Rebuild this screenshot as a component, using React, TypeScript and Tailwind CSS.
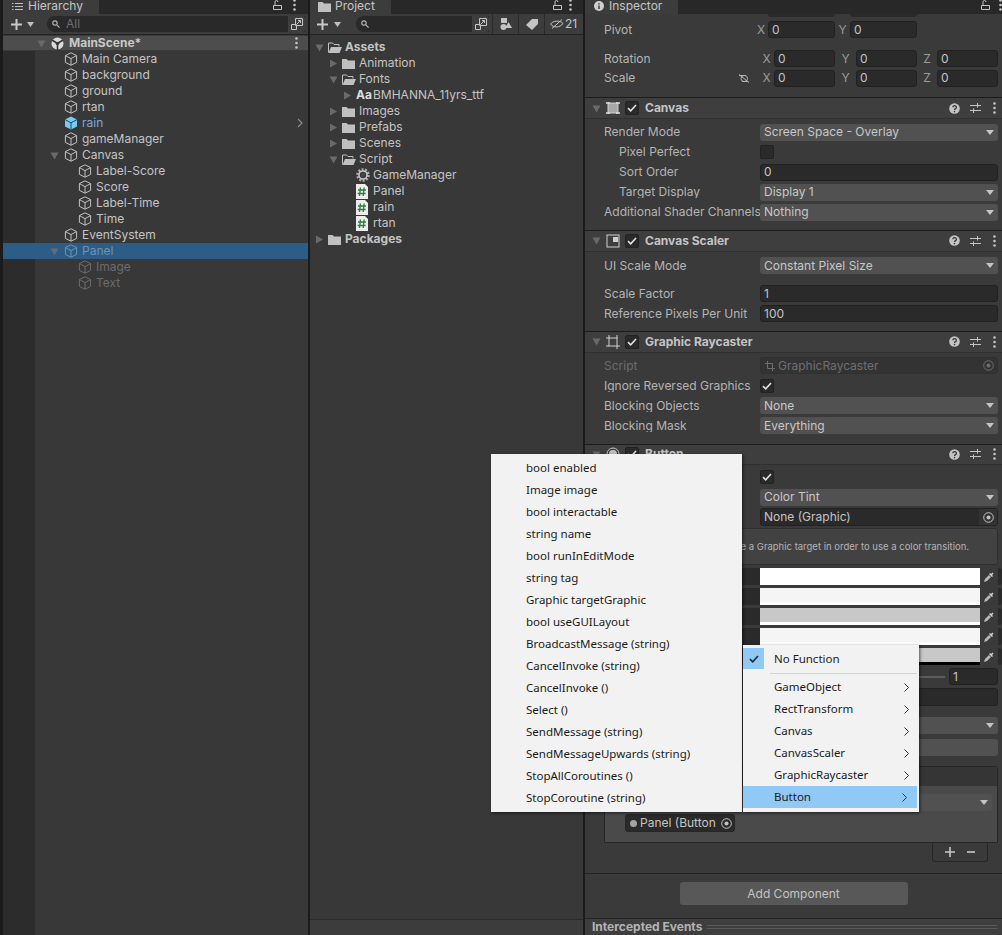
import React from "react";

type NodeRow = {
  name: string;
  pad: string;
  arrow?: "open" | "closed";
  text?: string;
  icon?: string;
  bg?: string;
};

const hierarchyRows: NodeRow[] = [
  { name: "Main Camera", pad: "pl-[47px]" },
  { name: "background", pad: "pl-[47px]" },
  { name: "ground", pad: "pl-[47px]" },
  { name: "rtan", pad: "pl-[47px]" },
  { name: "rain", pad: "pl-[47px]", text: "text-[#7aa9de]", icon: "blue" },
  { name: "gameManager", pad: "pl-[47px]" },
  { name: "Canvas", pad: "pl-[47px]", arrow: "open" },
  { name: "Label-Score", pad: "pl-[61px]" },
  { name: "Score", pad: "pl-[61px]" },
  { name: "Label-Time", pad: "pl-[61px]" },
  { name: "Time", pad: "pl-[61px]" },
  { name: "EventSystem", pad: "pl-[47px]" },
  { name: "Panel", pad: "pl-[47px]", arrow: "open", text: "text-[#6d93b6]", icon: "dimblue", bg: "bg-[#2c5d87]" },
  { name: "Image", pad: "pl-[61px]", text: "text-[#6c6c6c]", icon: "dim" },
  { name: "Text", pad: "pl-[61px]", text: "text-[#6c6c6c]", icon: "dim" },
];

const menuOne = [
  "bool enabled",
  "Image image",
  "bool interactable",
  "string name",
  "bool runInEditMode",
  "string tag",
  "Graphic targetGraphic",
  "bool useGUILayout",
  "BroadcastMessage (string)",
  "CancelInvoke (string)",
  "CancelInvoke ()",
  "Select ()",
  "SendMessage (string)",
  "SendMessageUpwards (string)",
  "StopAllCoroutines ()",
  "StopCoroutine (string)",
];

const menuTwo = ["GameObject", "RectTransform", "Canvas", "CanvasScaler", "GraphicRaycaster", "Button"];

const Arrow = ({ open }: { open?: boolean }) => (
  <svg width="9" height="9" viewBox="0 0 9 9" className="shrink-0">
    {open ? <path d="M0.5 1.5h8L4.5 8.5z" fill="#6a6a6a" /> : <path d="M1 0.5v8l7-4z" fill="#6a6a6a" />}
  </svg>
);

const Cube = ({ kind }: { kind?: string }) => {
  if (kind === "blue") {
    return (
      <svg width="14" height="14" viewBox="0 0 14 14" className="shrink-0">
        <path d="M7 .5l6 3v7l-6 3-6-3v-7z" fill="#72cdf6" />
        <path d="M1 3.6L7 6.8l6-3.2M7 6.8v6.7" fill="none" stroke="#2f4552" strokeWidth="1" />
      </svg>
    );
  }
  const c = kind === "dim" ? "#6c6c6c" : kind === "dimblue" ? "#6d93b6" : "#c2c2c2";
  return (
    <svg width="14" height="14" viewBox="0 0 14 14" fill="none" stroke={c} strokeWidth="1" className="shrink-0">
      <path d="M7 .8l5.6 2.8v6.8L7 13.2 1.4 10.4V3.6z" />
      <path d="M1.4 3.6L7 6.6l5.6-3M7 6.6v6.6" />
    </svg>
  );
};

const FolderClosed = () => (
  <svg width="13" height="11" viewBox="0 0 13 11" className="shrink-0">
    <path d="M0 1h4.5l1.5 1.5h7V11H0z" fill="#c0c0c0" />
  </svg>
);

const FolderOpen = () => (
  <svg width="14" height="11" viewBox="0 0 14 11" className="shrink-0">
    <path d="M.5 10.5V1h4l1.5 1.5h5V4.5" fill="none" stroke="#c0c0c0" strokeWidth="1" />
    <path d="M3 5h11l-2.5 6H.5z" fill="#c0c0c0" />
  </svg>
);

const HashFile = () => (
  <svg width="12" height="15" viewBox="0 0 12 15" className="shrink-0">
    <path d="M0 0h9l3 3v12H0z" fill="#ededed" />
    <path d="M4.5 3.5L3.5 12M8.2 3.5L7.2 12M2 6h8M1.6 9.5h8" stroke="#2f7d3a" strokeWidth="1.3" fill="none" />
  </svg>
);

const Gear = () => (
  <svg width="14" height="14" viewBox="0 0 14 14" className="shrink-0">
    <circle cx="7" cy="7" r="5.5" fill="none" stroke="#a9a9a9" strokeWidth="2.6" strokeDasharray="2 1.4" />
    <circle cx="7" cy="7" r="4" fill="none" stroke="#c8c8c8" strokeWidth="1.6" />
    <circle cx="7" cy="7" r="2.2" fill="#3f4654" />
  </svg>
);

const SceneIcon = () => (
  <svg width="13" height="13" viewBox="0 0 13 13" className="shrink-0">
    <circle cx="6.5" cy="6.5" r="6" fill="#dcdcdc" />
    <path d="M6.5 6.5V13M6.5 6.5L1 3M6.5 6.5L12 3" stroke="#383838" strokeWidth="1.6" fill="none" />
    <circle cx="6.5" cy="6.5" r="1.8" fill="#383838" />
  </svg>
);

const Kebab = () => (
  <svg width="3" height="12" viewBox="0 0 3 12" className="shrink-0">
    <circle cx="1.5" cy="1.5" r="1.3" fill="#c4c4c4" />
    <circle cx="1.5" cy="6" r="1.3" fill="#c4c4c4" />
    <circle cx="1.5" cy="10.5" r="1.3" fill="#c4c4c4" />
  </svg>
);

const Lock = () => (
  <svg width="9" height="10" viewBox="0 0 9 10" fill="none" stroke="#c4c4c4" className="shrink-0">
    <path d="M.5 5.5h8v4h-8zM2 5.5V2a1.5 1.5 0 0 1 3 0" />
  </svg>
);

const Plus = () => (
  <svg width="11" height="11" viewBox="0 0 11 11" className="shrink-0">
    <path d="M5.5 0v11M0 5.5h11" stroke="#c8c8c8" strokeWidth="2" />
  </svg>
);

const Caret = () => (
  <svg width="7" height="5" viewBox="0 0 7 5" className="shrink-0">
    <path d="M0 0h7L3.5 5z" fill="#c0c0c0" />
  </svg>
);

const Magnifier = () => (
  <svg width="8" height="8" viewBox="0 0 8 8" fill="none" stroke="#b4b4b4" strokeWidth="1.2" className="shrink-0">
    <circle cx="3" cy="3" r="2.2" />
    <path d="M4.8 4.8L7.6 7.6" />
  </svg>
);

const PickerIcon = () => (
  <svg width="12" height="12" viewBox="0 0 12 12" fill="none" stroke="#c4c4c4" className="shrink-0">
    <path d="M4.5.5h7v7h-7zM.5 6.5h5v5h-5z" />
    <path d="M6 6l3.5-3.5M7 2.5h2.5V5" />
  </svg>
);

const Check = ({ color = "#e2e2e2" }: { color?: string }) => (
  <svg width="10" height="8" viewBox="0 0 10 8" fill="none" stroke={color} strokeWidth="1.6" className="shrink-0">
    <path d="M1 4.2L3.7 6.8 9 1" />
  </svg>
);

const Target = ({ c = "#c4c4c4" }: { c?: string }) => (
  <svg width="11" height="11" viewBox="0 0 11 11" className="shrink-0">
    <circle cx="5.5" cy="5.5" r="4.8" fill="none" stroke={c} />
    <circle cx="5.5" cy="5.5" r="2" fill={c} />
  </svg>
);

const Dropper = () => (
  <svg width="12" height="12" viewBox="0 0 12 12" className="shrink-0">
    <path d="M1 11l1-3 4-4 2 2-4 4z" fill="#b8b8b8" />
    <path d="M6 3l1-1 1 1 1.5-1.5 1 1L9 4l1 1-1 1z" fill="#d4d4d4" />
  </svg>
);

const HelpIcon = () => (
  <svg width="11" height="11" viewBox="0 0 11 11" className="shrink-0">
    <circle cx="5.5" cy="5.5" r="5.3" fill="#c4c4c4" />
    <path d="M3.8 4.2a1.8 1.6 0 1 1 2.7 1.4c-.7.4-1 .6-1 1.3" fill="none" stroke="#3c3c3c" strokeWidth="1.3" />
    <circle cx="5.5" cy="8.6" r=".8" fill="#3c3c3c" />
  </svg>
);

const Presets = () => (
  <svg width="11" height="10" viewBox="0 0 11 10" stroke="#c4c4c4" fill="none" className="shrink-0">
    <path d="M0 2.5h11M0 7.5h11M7.5 0v4.5M3.5 5.5V10" />
  </svg>
);

const TreeRow = ({ row }: { row: NodeRow }) => (
  <div className={`flex h-4 items-center ${row.pad} ${row.bg ?? ""}`}>
    <span className="flex w-[14px] shrink-0">{row.arrow && <Arrow open />}</span>
    <Cube kind={row.icon} />
    <span className={`ml-[4px] ${row.text ?? "text-[#c4c4c4]"}`}>{row.name}</span>
    {row.name === "rain" && (
      <svg width="6" height="10" viewBox="0 0 6 10" fill="none" stroke="#8a8a8a" strokeWidth="1.2" className="ml-auto mr-[5px]">
        <path d="M1 1l4 4-4 4" />
      </svg>
    )}
  </div>
);

const ProjectRow = ({ pad, arrow, icon, label, bold }: { pad: string; arrow?: "open" | "closed"; icon: React.ReactNode; label: string; bold?: boolean }) => (
  <div className={`flex h-4 items-center ${pad}`}>
    <span className="flex w-[13px] shrink-0">{arrow && <Arrow open={arrow === "open"} />}</span>
    <span className="flex w-[17px] shrink-0">{icon}</span>
    <span className={bold ? "font-bold text-[#c4c4c4]" : "text-[#c4c4c4]"}>{label}</span>
  </div>
);

const Field = ({ value, w = "flex-1", dim }: { value?: string; w?: string; dim?: boolean }) => (
  <div className={`flex h-[17px] items-center rounded-[3px] border border-[#212121] bg-[#2a2a2a] pl-[3px] ${w} ${dim ? "text-[#6c6c6c]" : "text-[#c4c4c4]"}`}>
    {value}
  </div>
);

const Dropdown = ({ value, w = "flex-1" }: { value?: string; w?: string }) => (
  <div className={`flex h-[17px] items-center justify-between rounded-[3px] bg-[#515151] pl-[4px] pr-[4px] text-[#c8c8c8] ${w}`}>
    <span>{value}</span>
    <svg width="8" height="5" viewBox="0 0 8 5">
      <path d="M0 0h8L4 5z" fill="#c4c4c4" />
    </svg>
  </div>
);

const CheckBox = ({ on }: { on?: boolean }) => (
  <div className="flex h-[14px] w-[14px] items-center justify-center rounded-[2px] border border-[#222222] bg-[#2a2a2a]">
    {on && <Check />}
  </div>
);

const Row = ({ label, indent, dim, children }: { label: string; indent?: boolean; dim?: boolean; children: React.ReactNode }) => (
  <div className="flex h-5 items-center pl-[19px] pr-1">
    <div className={`w-[156px] shrink-0 overflow-hidden whitespace-nowrap ${indent ? "pl-[15px]" : ""} ${dim ? "text-[#6c6c6c]" : "text-[#b4b4b4]"}`}>{label}</div>
    <div className="flex min-w-0 flex-1 items-center">{children}</div>
  </div>
);

const Header = ({ icon, title }: { icon: React.ReactNode; title: string }) => (
  <div className="flex h-[22px] items-center border-y border-t-[#1c1c1c] border-b-[#303030] bg-[#3e3e3e] pl-[7px] pr-1">
    <Arrow open />
    <span className="ml-[5px] flex w-[14px] justify-center">{icon}</span>
    <span className="ml-[5px]">
      <CheckBox on />
    </span>
    <span className="ml-[6px] font-bold text-[#c4c4c4]">{title}</span>
    <span className="ml-auto flex items-center">
      <HelpIcon />
      <span className="ml-[10px] flex">
        <Presets />
      </span>
      <span className="ml-[12px] mr-[2px] flex">
        <Kebab />
      </span>
    </span>
  </div>
);

const RectIcon = ({ kind }: { kind: string }) => (
  <svg width="14" height="14" viewBox="0 0 14 14" className="shrink-0">
    {kind === "canvas" && (
      <>
        <rect x="2" y="2" width="10" height="10" fill="#a8a8a8" stroke="#d0d0d0" />
        <path d="M0 2h4M0 12h4M10 2h4M10 12h4" stroke="#e0e0e0" strokeWidth="1.4" />
      </>
    )}
    {kind === "scaler" && (
      <>
        <rect x="1" y="1" width="12" height="12" fill="none" stroke="#d0d0d0" />
        <rect x="7" y="3" width="5" height="5" fill="#d0d0d0" />
      </>
    )}
    {kind === "ray" && (
      <>
        <rect x="3" y="3" width="8" height="8" fill="none" stroke="#d0d0d0" />
        <path d="M0 3h3M3 0v3M11 14v-3M14 11h-3M11 0v3M0 11h3" stroke="#d0d0d0" />
      </>
    )}
    {kind === "button" && (
      <>
        <circle cx="7" cy="7" r="6" fill="none" stroke="#c4c4c4" />
        <circle cx="7" cy="7" r="4" fill="#c4c4c4" />
      </>
    )}
  </svg>
);

const Swatch = ({ fill, strip }: { fill: string; strip: string }) => (
  <div className="flex h-[17px] items-stretch overflow-hidden rounded-[2px] bg-[#2a2a2a] pl-[175px] pr-1 mt-[3px] first:mt-0">
    <div className={`flex w-[220px] flex-col ${fill}`}>
      <div className="flex-1" />
      <div className={`h-[3px] ${strip}`} />
    </div>
    <div className="flex flex-1 items-center justify-center bg-[#3a3a3a]">
      <Dropper />
    </div>
  </div>
);

const TabIconBars = () => (
  <svg width="11" height="9" viewBox="0 0 11 9" stroke="#c0c0c0" className="shrink-0">
    <path d="M3 1.5h8M3 4.5h8M3 7.5h8M0 1.5h1.5M0 4.5h1.5M0 7.5h1.5" />
  </svg>
);

const VectorAxis = ({ a, w }: { a: string; w: string }) => <span className={`${w} shrink-0 text-center text-[#9a9a9a]`}>{a}</span>;

export default function App() {
  return (
    <div className="relative flex h-[935px] w-[1002px] overflow-hidden bg-[#1b1b1b] font-['Inter',sans-serif] text-[12px] leading-none">
      {/* Hierarchy */}
      <section className="ml-[3px] flex h-full w-[305px] shrink-0 flex-col">
        <div className="flex h-[14px] shrink-0 items-center bg-[#282828]">
          <div className="flex h-full w-[96px] items-center bg-[#3c3c3c] pb-[2px] pl-[9px] text-[#c4c4c4]">
            <TabIconBars />
            <span className="ml-[5px]">Hierarchy</span>
          </div>
          <span className="ml-auto flex items-center pb-[4px]">
            <Lock />
            <span className="ml-[11px] mr-[12px] flex">
              <Kebab />
            </span>
          </span>
        </div>
        <div className="flex h-[21px] shrink-0 items-center border-b border-[#232323] bg-[#3c3c3c]">
          <span className="ml-[8px] flex">
            <Plus />
          </span>
          <span className="ml-[5px] flex">
            <Caret />
          </span>
          <div className="ml-[13px] flex h-[16px] w-[258px] items-center rounded-l-full rounded-r-[3px] bg-[#292929] pl-[5px]">
            <Magnifier />
            <span className="ml-[6px] text-[#6e6e6e]">All</span>
            <span className="ml-auto flex h-full w-[17px] items-center justify-center rounded-r-[3px] bg-[#3e3e3e]">
              <PickerIcon />
            </span>
          </div>
        </div>
        <div className="flex-1 bg-[linear-gradient(to_right,#2c2c2c_32px,#383838_32px)]">
          <div className="flex h-4 items-center border-y border-[#3a3a3a] bg-[#4d4d4d] pl-[34px]">
            <Arrow open />
            <span className="ml-[5px] flex">
              <SceneIcon />
            </span>
            <span className="ml-[5px] font-bold text-[#c8c8c8]">MainScene*</span>
            <span className="ml-auto mr-[10px] flex">
              <Kebab />
            </span>
          </div>
          {hierarchyRows.map((row) => (
            <TreeRow key={row.name} row={row} />
          ))}
        </div>
      </section>

      {/* Project */}
      <section className="ml-[2px] flex h-full w-[273px] shrink-0 flex-col">
        <div className="flex h-[14px] shrink-0 items-center bg-[#282828]">
          <div className="flex h-full w-[81px] items-center bg-[#3c3c3c] pb-[2px] pl-[8px] text-[#c4c4c4]">
            <FolderClosed />
            <span className="ml-[4px]">Project</span>
          </div>
          <span className="ml-auto flex items-center pb-[4px]">
            <Lock />
            <span className="ml-[7px] mr-[11px] flex">
              <Kebab />
            </span>
          </span>
        </div>
        <div className="flex h-[21px] shrink-0 items-center border-b border-[#232323] bg-[#3c3c3c]">
          <span className="ml-[7px] flex">
            <Plus />
          </span>
          <span className="ml-[6px] flex">
            <Caret />
          </span>
          <div className="ml-[15px] flex h-[16px] w-[133px] items-center rounded-l-full rounded-r-[3px] bg-[#292929] pl-[5px]">
            <Magnifier />
            <span className="ml-auto flex h-full w-[17px] items-center justify-center rounded-r-[3px] bg-[#3e3e3e]">
              <PickerIcon />
            </span>
          </div>
          <div className="ml-[3px] flex h-full w-[26px] items-center justify-center border-l border-[#2a2a2a]">
            <svg width="12" height="12" viewBox="0 0 12 12" fill="#c4c4c4">
              <rect x="1" y="0" width="6" height="5" />
              <circle cx="3.5" cy="9" r="3" />
              <path d="M8.5 4l3.5 6H5z" />
            </svg>
          </div>
          <div className="flex h-full w-[26px] items-center justify-center border-l border-[#2a2a2a]">
            <svg width="12" height="11" viewBox="0 0 12 11" fill="#c4c4c4">
              <path d="M6 0h6v5l-6 6-6-5z" />
            </svg>
          </div>
          <div className="flex h-full flex-1 items-center border-l border-[#2a2a2a] pl-[5px] text-[#c4c4c4]">
            <svg width="14" height="10" viewBox="0 0 14 10" fill="none" stroke="#c4c4c4">
              <path d="M.5 5C3 1.5 10 1 13 4.5 10 9 3 9 .5 5zM2 9.5L12 .5" />
            </svg>
            <span className="ml-[1px]">21</span>
          </div>
        </div>
        <div className="flex-1 bg-[#383838] pt-[4px]">
          <ProjectRow pad="pl-[5px]" arrow="open" icon={<FolderOpen />} label="Assets" bold />
          <ProjectRow pad="pl-[19px]" arrow="closed" icon={<FolderClosed />} label="Animation" />
          <ProjectRow pad="pl-[19px]" arrow="open" icon={<FolderOpen />} label="Fonts" />
          <ProjectRow pad="pl-[33px]" arrow="closed" icon={<span className="font-bold text-[#dedede]">Aa</span>} label="BMHANNA_11yrs_ttf" />
          <ProjectRow pad="pl-[19px]" arrow="closed" icon={<FolderClosed />} label="Images" />
          <ProjectRow pad="pl-[19px]" arrow="closed" icon={<FolderClosed />} label="Prefabs" />
          <ProjectRow pad="pl-[19px]" arrow="closed" icon={<FolderClosed />} label="Scenes" />
          <ProjectRow pad="pl-[19px]" arrow="open" icon={<FolderOpen />} label="Script" />
          <ProjectRow pad="pl-[33px]" icon={<Gear />} label="GameManager" />
          <ProjectRow pad="pl-[33px]" icon={<HashFile />} label="Panel" />
          <ProjectRow pad="pl-[33px]" icon={<HashFile />} label="rain" />
          <ProjectRow pad="pl-[33px]" icon={<HashFile />} label="rtan" />
          <ProjectRow pad="pl-[5px]" arrow="closed" icon={<FolderClosed />} label="Packages" bold />
        </div>
        <div className="h-[16px] shrink-0 border-t border-[#2a2a2a] bg-[#3c3c3c]" />
      </section>

      {/* Inspector */}
      <section className="ml-[2px] flex h-full min-w-0 flex-1 flex-col overflow-hidden bg-[#3a3a3a]">
        <div className="flex h-[14px] shrink-0 items-center bg-[#282828]">
          <div className="flex h-full w-[93px] items-center bg-[#3c3c3c] pb-[2px] pl-[9px] text-[#c4c4c4]">
            <svg width="10" height="10" viewBox="0 0 10 10">
              <circle cx="5" cy="5" r="5" fill="#d0d0d0" />
              <path d="M5 2.2v1.2M5 4.6v3.4" stroke="#333333" strokeWidth="1.4" />
            </svg>
            <span className="ml-[5px]">Inspector</span>
          </div>
          <span className="ml-auto flex items-center pb-[4px]">
            <Lock />
            <span className="ml-[9px] flex">
              <Kebab />
            </span>
          </span>
        </div>

        <div className="flex h-[3px] shrink-0 pl-[183px]">
          <div className="h-full w-[67px] rounded-b-[3px] bg-[#2a2a2a]" />
          <div className="ml-[15px] h-full w-[67px] rounded-b-[3px] bg-[#2a2a2a]" />
        </div>

        <div className="mt-[4px] flex h-[18px] items-center pl-[19px]">
          <span className="w-[150px] shrink-0 text-[#b4b4b4]">Pivot</span>
          <VectorAxis a="X" w="w-[14px]" />
          <Field value="0" w="w-[67px]" />
          <VectorAxis a="Y" w="w-[15px]" />
          <Field value="0" w="w-[67px]" />
        </div>
        <div className="mt-[11px] flex h-[18px] items-center pl-[19px]">
          <span className="w-[155px] shrink-0 text-[#b4b4b4]">Rotation</span>
          <VectorAxis a="X" w="w-[15px]" />
          <Field value="0" w="w-[61px]" />
          <VectorAxis a="Y" w="w-[21px]" />
          <Field value="0" w="w-[61px]" />
          <VectorAxis a="Z" w="w-[20px]" />
          <Field value="0" w="w-[61px]" />
        </div>
        <div className="mt-[2px] flex h-[18px] items-center pl-[19px]">
          <span className="w-[134px] shrink-0 text-[#b4b4b4]">Scale</span>
          <svg width="12" height="9" viewBox="0 0 12 9" fill="none" stroke="#b4b4b4" className="shrink-0">
            <path d="M1 1.5h5.5a2.8 2.8 0 0 1 0 6H4M8 1.5h-2a2.8 2.8 0 0 0 0 6h4M1 .5l10 8" />
          </svg>
          <span className="w-[9px] shrink-0" />
          <VectorAxis a="X" w="w-[15px]" />
          <Field value="0" w="w-[61px]" />
          <VectorAxis a="Y" w="w-[21px]" />
          <Field value="0" w="w-[61px]" />
          <VectorAxis a="Z" w="w-[20px]" />
          <Field value="0" w="w-[61px]" />
        </div>
        <div className="h-[10px] shrink-0" />

        <Header icon={<RectIcon kind="canvas" />} title="Canvas" />
        <div className="pb-[8px] pt-[3px]">
          <Row label="Render Mode">
            <Dropdown value="Screen Space - Overlay" />
          </Row>
          <Row label="Pixel Perfect" indent>
            <CheckBox />
          </Row>
          <Row label="Sort Order" indent>
            <Field value="0" />
          </Row>
          <Row label="Target Display" indent>
            <Dropdown value="Display 1" />
          </Row>
          <Row label="Additional Shader Channels">
            <Dropdown value="Nothing" />
          </Row>
        </div>

        <Header icon={<RectIcon kind="scaler" />} title="Canvas Scaler" />
        <div className="pb-[7px] pt-[4px]">
          <Row label="UI Scale Mode">
            <Dropdown value="Constant Pixel Size" />
          </Row>
          <div className="h-2" />
          <Row label="Scale Factor">
            <Field value="1" />
          </Row>
          <Row label="Reference Pixels Per Unit">
            <Field value="100" />
          </Row>
        </div>

        <Header icon={<RectIcon kind="ray" />} title="Graphic Raycaster" />
        <div className="pb-[8px] pt-[3px]">
          <Row label="Script" dim>
            <div className="flex h-[17px] flex-1 items-center justify-between rounded-[3px] border border-[#303030] bg-[#333333] pl-[4px] pr-[3px] text-[#6e6e6e]">
              <span className="flex items-center">
                <svg width="10" height="10" viewBox="0 0 10 10" fill="none" stroke="#6e6e6e" className="mr-[3px]">
                  <path d="M2.5 2.5h5v5h-5zM0 2.5h2.5M2.5 0v2.5M10 7.5H7.5M7.5 10V7.5" />
                </svg>
                GraphicRaycaster
              </span>
              <Target c="#6e6e6e" />
            </div>
          </Row>
          <Row label="Ignore Reversed Graphics">
            <CheckBox on />
          </Row>
          <Row label="Blocking Objects">
            <Dropdown value="None" />
          </Row>
          <Row label="Blocking Mask">
            <Dropdown value="Everything" />
          </Row>
        </div>

        <Header icon={<RectIcon kind="button" />} title="Button" />
        <div className="pt-[2px]">
          <Row label="Interactable">
            <CheckBox on />
          </Row>
          <Row label="Transition">
            <Dropdown value="Color Tint" />
          </Row>
          <div className="mt-[1px] flex h-[18px] pl-[175px] pr-1">
            <div className="flex flex-1 items-center justify-between rounded-[3px] border border-[#212121] bg-[#2a2a2a] pl-[3px] text-[#c4c4c4]">
              <span>None (Graphic)</span>
              <span className="flex h-full w-[18px] items-center justify-center bg-[#333333]">
                <Target />
              </span>
            </div>
          </div>
          <div className="ml-[19px] mr-1 mt-[2px] flex h-[37px] items-center justify-end rounded-[3px] border border-[#2f2f2f] bg-[#424242] pr-[28px] text-[9.5px] text-[#b4b4b4]">
            You must have a Graphic target in order to use a color transition.
          </div>
          <div className="mt-[3px]">
            <Swatch fill="bg-white" strip="bg-white" />
            <Swatch fill="bg-[#f5f5f5]" strip="bg-white" />
            <Swatch fill="bg-[#c8c8c8]" strip="bg-white" />
            <Swatch fill="bg-[#f5f5f5]" strip="bg-white" />
            <Swatch fill="bg-[#c8c8c8]" strip="bg-black" />
          </div>
          <div className="mt-[3px] flex h-[17px] items-center pl-[175px] pr-1">
            <div className="h-[2px] flex-1 bg-[#5c5c5c]" />
            <Field value="1" w="ml-[4px] w-[49px]" />
          </div>
          <div className="ml-[175px] mr-1 mt-[3px] h-[18px] rounded-[3px] border border-[#212121] bg-[#2a2a2a]" />
          <div className="ml-[175px] mr-1 mt-[11px]">
            <Dropdown />
          </div>
          <div className="ml-[175px] mr-1 mt-[5px] h-[17px] rounded-[3px] bg-[#515151]" />

          <div className="ml-[19px] mr-1 mt-[10px] rounded-t-[3px] border border-[#262626]">
            <div className="h-[19px] bg-[#353535]" />
            <div className="h-[56px] bg-[#4a4a4a] pl-[20px] pr-[5px] pt-[8px]">
              <div className="flex justify-end">
                <Dropdown w="w-[180px]" />
              </div>
              <div className="mt-[3px] flex h-[18px] w-[110px] items-center rounded-[3px] border border-[#262626] bg-[#2a2a2a] pl-[4px] pr-[2px] text-[#c4c4c4]">
                <span className="mr-[3px] h-[7px] w-[7px] shrink-0 rounded-full bg-[#a4a4a4]" />
                <span className="overflow-hidden whitespace-nowrap">Panel (Button</span>
                <span className="ml-auto flex">
                  <Target />
                </span>
              </div>
            </div>
          </div>
          <div className="flex justify-end pr-[14px]">
            <div className="flex h-[19px] w-[56px] items-center justify-around rounded-b-[3px] border-x border-b border-[#262626] bg-[#3a3a3a] px-[6px]">
              <svg width="10" height="10" viewBox="0 0 10 10">
                <path d="M5 0v10M0 5h10" stroke="#c8c8c8" strokeWidth="1.6" />
              </svg>
              <svg width="8" height="10" viewBox="0 0 8 10">
                <path d="M0 5h8" stroke="#c8c8c8" strokeWidth="1.6" />
              </svg>
            </div>
          </div>
        </div>

        <div className="mt-[11px] border-t border-[#232323] pt-[8px]">
          <div className="mx-auto flex h-[23px] w-[228px] items-center justify-center rounded-[3px] bg-[#585858] text-[#c4c4c4]">Add Component</div>
        </div>
        <div className="mt-[13px] flex h-[17px] items-center border-t border-[#232323] bg-[#3e3e3e] pl-[7px] pr-[5px]">
          <span className="shrink-0 font-bold text-[#b4b4b4]">Intercepted Events</span>
          <div className="ml-[5px] h-[4px] flex-1 border-y border-[#5a5a5a]" />
        </div>
      </section>

      {/* First context menu */}
      <div className="absolute left-[491px] top-[454px] h-[358px] w-[251px] bg-[#f2f2f2] pt-[3px] font-['Noto_Sans',sans-serif] text-[11.5px] text-[#1a1a1a] shadow-[1px_1px_3px_rgba(0,0,0,0.6)]">
        {menuOne.map((item, i) => (
          <div key={i} className="flex h-[22px] items-center pl-[35px]">
            {item}
          </div>
        ))}
      </div>

      {/* Second context menu */}
      <div className="absolute left-[743px] top-[645px] h-[167px] w-[176px] bg-[#f2f2f2] pt-[3px] font-['Noto_Sans',sans-serif] text-[11.5px] text-[#1a1a1a] shadow-[1px_1px_3px_rgba(0,0,0,0.6)]">
        <div className="flex h-[21px] items-center">
          <span className="flex h-full w-[21px] items-center justify-center bg-[#90c8f6]">
            <Check color="#1a2a3a" />
          </span>
          <span className="ml-[10px]">No Function</span>
        </div>
        <div className="ml-[27px] mr-[2px] mt-[4px] h-px bg-[#d4d4d4]" />
        <div className="mt-[2px]">
          {menuTwo.map((item) => (
            <div key={item} className={`flex h-[22px] items-center pl-[31px] pr-[10px] ${item === "Button" ? "bg-[#90c8f6]" : ""} ${item === "Button" ? "mr-[2px]" : ""}`}>
              <span>{item}</span>
              <svg width="5" height="9" viewBox="0 0 5 9" fill="none" stroke="#333333" className="ml-auto">
                <path d="M.5.5l4 4-4 4" />
              </svg>
            </div>
          ))}
        </div>
      </div>
    </div>
  );
}
